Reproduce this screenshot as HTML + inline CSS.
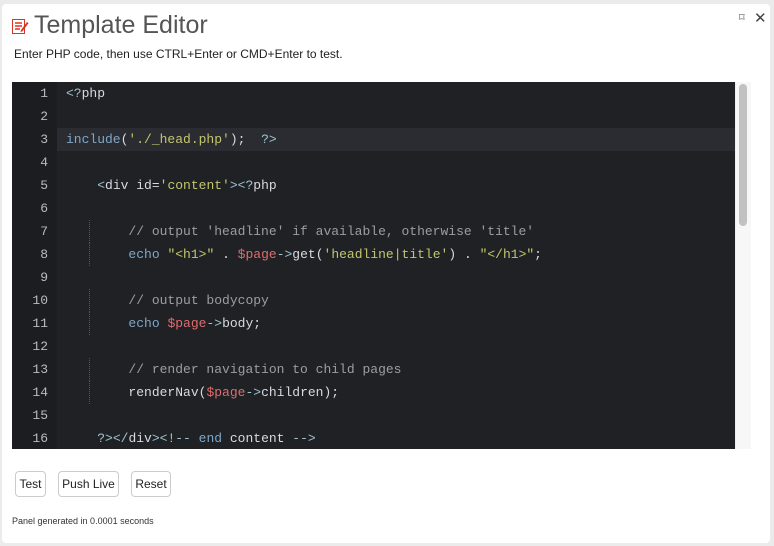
<!DOCTYPE html>
<html><head><meta charset="utf-8"><style>
body{margin:0;width:774px;height:546px;background:#ebebeb;font-family:"Liberation Sans",sans-serif;position:relative;overflow:hidden}
.panel{position:absolute;left:2px;top:4px;width:768px;height:539px;background:#fff;border-radius:4px}
h1{position:absolute;left:34px;top:11px;margin:0;font-weight:normal;font-size:25px;color:#555}
.desc{position:absolute;left:14px;top:47px;font-size:12px;color:#222}
.ed{position:absolute;left:12px;top:82px;width:723px;height:367px;background:#202124;overflow:hidden}
.gut{position:absolute;left:0;top:0;width:45px;height:367px;background:#1b1d20}
.sb{position:absolute;left:735px;top:82px;width:15px;height:367px;background:#f7f7f7;border-left:1px solid #eee}
.thumb{position:absolute;left:739px;top:84px;width:8px;height:142px;background:#c1c1c1;border-radius:4px}
.ln{position:absolute;left:0;width:36px;text-align:right;font:13px "Liberation Mono",monospace;color:#b8bcc2}
.cl{position:absolute;left:54px;font:13px/23px "Liberation Mono",monospace;color:#d7dae0;white-space:pre}
.act{position:absolute;left:45px;top:46px;width:678px;height:23px;background:#2b2c31}
.g{position:absolute;left:77px;width:0;height:23px;border-left:1px dotted #555}
.k{color:#7ea7c7}.s{color:#c3c66e}.v{color:#e06c6c}.c{color:#9a9ea4}.t{color:#9ec3cf}
.btn{position:absolute;top:471px;height:24px;border:1px solid #ccc;border-radius:4px;font-size:12px;line-height:24px;color:#222;text-align:center;background:#fff}
.foot{position:absolute;left:12px;top:516px;font-size:9px;color:#333}
</style></head><body>
<div class="panel"></div>
<svg style="position:absolute;left:12px;top:17px" width="17" height="18" viewBox="0 0 17 18"><rect x="0.5" y="2.5" width="12" height="14" fill="#fff" stroke="#d32" /><path d="M3 6h7M3 9h7M3 12h5" stroke="#d32" stroke-width="1.5"/><path d="M9 13l6-8 1.5 1.2-6 8-2 .8z" fill="#d32"/></svg>
<h1>Template Editor</h1>
<div class="desc">Enter PHP code, then use CTRL+Enter or CMD+Enter to test.</div>
<div style="position:absolute;left:739px;top:11px;font-size:11px;color:#555">&#x2311;</div>
<div style="position:absolute;left:754px;top:9px;font-size:15px;color:#444">✕</div>
<div class="ed">
<div class="gut"></div>
<div class="act"></div>
<div class="g" style="top:138px"></div><div class="g" style="top:161px"></div>
<div class="g" style="top:207px"></div><div class="g" style="top:230px"></div>
<div class="g" style="top:276px"></div><div class="g" style="top:299px"></div>
<div class="ln" style="top:0;line-height:23px">1<br>2<br>3<br>4<br>5<br>6<br>7<br>8<br>9<br>10<br>11<br>12<br>13<br>14<br>15<br>16</div>
<div class="cl" style="top:0"><span class="t">&lt;?</span>php

<span class="k">include</span>(<span class="s">'./_head.php'</span>);  <span class="t">?&gt;</span>

    <span class="t">&lt;</span>div id=<span class="s">'content'</span><span class="t">&gt;&lt;?</span>php

        <span class="c">// output 'headline' if available, otherwise 'title'</span>
        <span class="k">echo</span> <span class="s">"&lt;h1&gt;"</span> . <span class="v">$page</span><span class="t">-&gt;</span>get(<span class="s">'headline|title'</span>) . <span class="s">"&lt;/h1&gt;"</span>;

        <span class="c">// output bodycopy</span>
        <span class="k">echo</span> <span class="v">$page</span><span class="t">-&gt;</span>body;

        <span class="c">// render navigation to child pages</span>
        renderNav(<span class="v">$page</span><span class="t">-&gt;</span>children);

    <span class="t">?&gt;&lt;/</span>div<span class="t">&gt;&lt;!-- </span><span class="k">end</span> content <span class="t">--&gt;</span></div>
</div>
<div class="sb"></div><div class="thumb"></div>
<div class="btn" style="left:15px;width:29px">Test</div>
<div class="btn" style="left:58px;width:59px">Push Live</div>
<div class="btn" style="left:131px;width:38px">Reset</div>
<div class="foot">Panel generated in 0.0001 seconds</div>
</body></html>
